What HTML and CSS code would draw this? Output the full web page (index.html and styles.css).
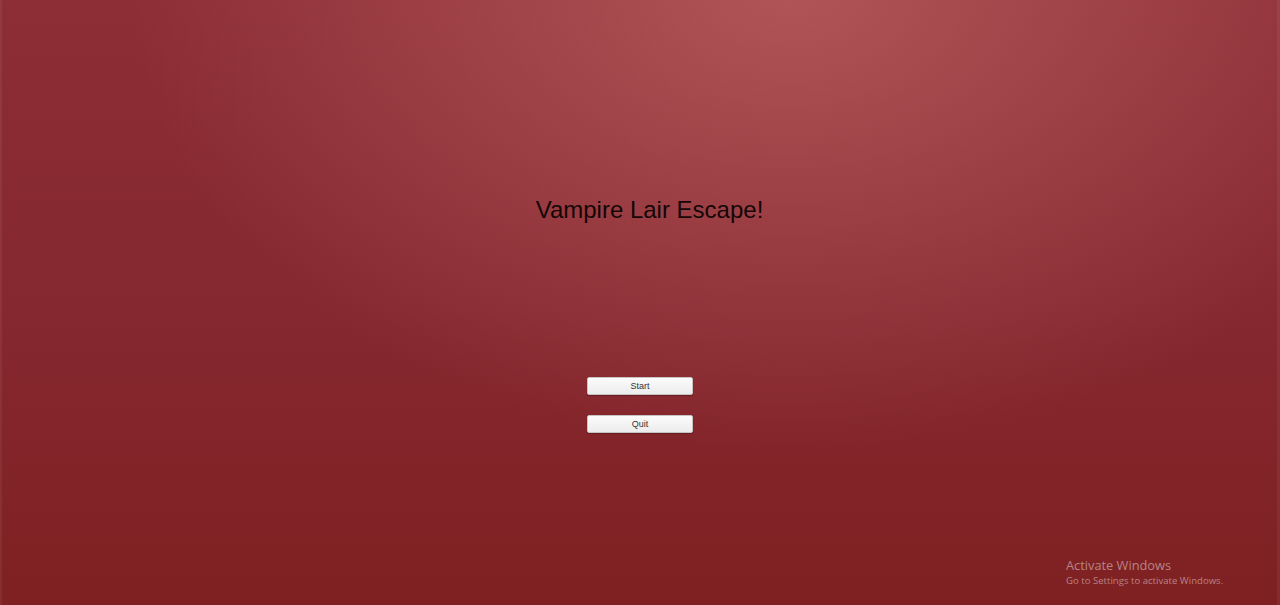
FILE: index.html
```html
<!DOCTYPE html>
<html lang="en">
<head>
  <meta charset="UTF-8">
  <meta name="viewport" content="width=device-width, initial-scale=1.0">
  <title>Vampire Lair Escape!</title>
  <link rel="stylesheet" href="styles.css">
</head>
<body>
  <main class="menu">
    <h1 class="title">Vampire Lair Escape!</h1>
    <div class="buttons">
      <button class="menu-btn">Start</button>
      <button class="menu-btn">Quit</button>
    </div>
  </main>

  <div class="watermark">
    <div class="watermark-head">Activate Windows</div>
    <div class="watermark-sub">Go to Settings to activate Windows.</div>
  </div>
</body>
</html>
```

FILE: styles.css
```css
html, body {
  height: 100%;
}
body {
  margin: 0;
  overflow: hidden;
  font-family: "Liberation Sans", Arial, sans-serif;
  background-color: #84242a;
  background-image:
    radial-gradient(ellipse 660px 460px at 790px -10px, rgba(190, 100, 100, 0.72), rgba(190, 100, 100, 0) 100%),
    linear-gradient(to bottom, #8d2d36 0%, #862830 50%, #7f2022 100%);
  box-shadow: inset 2px 0 0 rgba(255, 255, 255, 0.06), inset -3px 0 0 rgba(255, 255, 255, 0.05);
  position: relative;
}

/* 메뉴 */
.menu {
  display: flex;
  flex-direction: column;
  align-items: center;
}
.title {
  margin: 195px 0 0 19px;
  font-size: 24px;
  font-weight: normal;
  color: #140607;
  line-height: 30px;
}
.buttons {
  display: flex;
  flex-direction: column;
  gap: 20px;
  margin-top: 152px;
}
.menu-btn {
  width: 106px;
  height: 18px;
  padding: 0;
  border: 1px solid #c9c4c4;
  border-radius: 2px;
  background: linear-gradient(to bottom, #fbfbfb, #ececec);
  font-family: "Liberation Sans", Arial, sans-serif;
  font-size: 9px;
  color: #333;
  box-shadow: 0 1px 1px rgba(0, 0, 0, 0.25);
}

/* 워터마크 */
.watermark {
  position: absolute;
  left: 1066px;
  top: 557px;
  color: rgba(255, 255, 255, 0.45);
  font-family: "Open Sans", "Liberation Sans", sans-serif;
}
.watermark-head {
  font-size: 12.8px;
  line-height: 17px;
}
.watermark-sub {
  font-size: 9.6px;
  line-height: 14px;
}
```
